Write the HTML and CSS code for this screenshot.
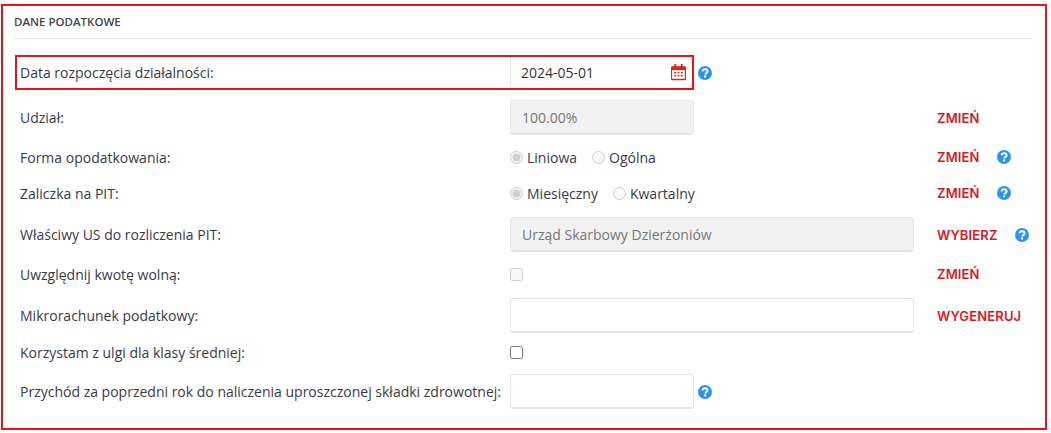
FILE: index.html
```html
<!DOCTYPE html>
<html lang="pl">
<head>
    <meta charset="UTF-8">
    <meta name="viewport" content="width=device-width, initial-scale=1.0">
    <title>Dane podatkowe</title>
    <link rel="stylesheet" href="styles.css">
</head>
<body>
    <svg class="sprite" width="0" height="0">
        <symbol id="help" viewBox="0 0 14 14">
            <circle cx="7" cy="7" r="7" fill="#2a94f0"/>
            <path d="M4.500 5.400C4.600 3.900 5.700 3.200 7.100 3.200c1.400 0 2.500.8 2.500 2 0 1-.6 1.500-1.300 1.900-.6.4-.8.6-.8 1.300" fill="none" stroke="#fff" stroke-width="1.900"/>
            <rect x="6" y="9.400" width="2.100" height="2" fill="#fff"/>
        </symbol>
    </svg>

    <div class="panel">
        <div class="panel-title">DANE PODATKOWE</div>

        <div class="form">
            <div class="start-row">
                <div class="highlight">
                    <label class="label">Data rozpoczęcia działalności:</label>
                    <div class="date-field">
                        <input class="date-input" type="text" value="2024-05-01">
                        <svg class="calendar" viewBox="0 0 16 18">
                            <path d="M1.500 3.500h13a1 1 0 0 1 1 1v11.500a1 1 0 0 1-1 1h-13a1 1 0 0 1-1-1V4.500a1 1 0 0 1 1-1z" fill="none" stroke="#d6281f" stroke-width="1.400"/>
                            <path d="M0.500 4.500a1 1 0 0 1 1-1h13a1 1 0 0 1 1 1V7H.5z" fill="#d6281f"/>
                            <rect x="3.500" y="0.500" width="2" height="4" rx="0.600" fill="#d6281f"/>
                            <rect x="10.500" y="0.500" width="2" height="4" rx="0.600" fill="#d6281f"/>
                            <path d="M3.500 9h2v1.500h-2zM7 9h2v1.500H7zM10.500 9h2v1.500h-2zM3.500 12.200h2v1.500h-2zM7 12.200h2v1.500H7zM10.500 12.200h2v1.500h-2z" fill="#d6281f"/>
                        </svg>
                    </div>
                </div>
                <svg class="help help-near"><use href="#help"/></svg>
            </div>

            <div class="row">
                <label class="label">Udział:</label>
                <input class="input input-short" type="text" value="100.00%" disabled>
                <div class="actions"><a class="action">ZMIEŃ</a></div>
            </div>

            <div class="row row-small">
                <label class="label">Forma opodatkowania:</label>
                <div class="radios">
                    <label class="radio"><input type="radio" name="forma" checked disabled>Liniowa</label>
                    <label class="radio"><input type="radio" name="forma" disabled>Ogólna</label>
                </div>
                <div class="actions"><a class="action">ZMIEŃ</a><svg class="help"><use href="#help"/></svg></div>
            </div>

            <div class="row row-small gap-wide">
                <label class="label">Zaliczka na PIT:</label>
                <div class="radios">
                    <label class="radio"><input type="radio" name="zaliczka" checked disabled>Miesięczny</label>
                    <label class="radio"><input type="radio" name="zaliczka" disabled>Kwartalny</label>
                </div>
                <div class="actions"><a class="action">ZMIEŃ</a><svg class="help"><use href="#help"/></svg></div>
            </div>

            <div class="row gap-wide">
                <label class="label">Właściwy US do rozliczenia PIT:</label>
                <input class="input input-long" type="text" value="Urząd Skarbowy Dzierżoniów" disabled>
                <div class="actions"><a class="action">WYBIERZ</a><svg class="help"><use href="#help"/></svg></div>
            </div>

            <div class="row row-small">
                <label class="label">Uwzględnij kwotę wolną:</label>
                <div><input class="check" type="checkbox" disabled></div>
                <div class="actions"><a class="action">ZMIEŃ</a></div>
            </div>

            <div class="row gap-wide">
                <label class="label">Mikrorachunek podatkowy:</label>
                <input class="input input-long" type="text">
                <div class="actions"><a class="action">WYGENERUJ</a></div>
            </div>

            <div class="row row-small gap-tight">
                <label class="label">Korzystam z ulgi dla klasy średniej:</label>
                <div><input class="check" type="checkbox"></div>
            </div>

            <div class="row">
                <label class="label">Przychód za poprzedni rok do naliczenia uproszczonej składki zdrowotnej:</label>
                <div class="field-help">
                    <input class="input input-short" type="text">
                    <svg class="help help-near"><use href="#help"/></svg>
                </div>
            </div>
        </div>
    </div>
</body>
</html>
```

FILE: styles.css
```css
body { margin: 0; font-family: "Open Sans", sans-serif; font-size: 14px; color: #3a3a4a; background: #fff; }
.sprite { display: block; }

.panel { box-sizing: border-box; width: 1046px; height: 426px; margin: 4px 0 0 1px; border: 2px solid #e0161c; padding: 0 12px 0 11px; }
.panel-title { height: 32px; line-height: 32px; border-bottom: 1px solid #eaeaea; font-size: 11.5px; font-weight: 600; color: #444; }

.form { padding: 16px 0 0 6px; }
.row { display: grid; grid-template-columns: 490px 427px auto; align-items: center; height: 35px; margin-top: 10px; }
.row-small { height: 24px; }
.gap-wide { margin-top: 12px; }
.gap-tight { margin-top: 7px; }
.label { white-space: nowrap; }

.start-row { display: flex; align-items: center; }
.highlight { box-sizing: border-box; display: grid; grid-template-columns: 490px 182px; width: 679px; height: 35px; margin-left: -5px; padding-left: 3px; border: 2px solid #e0161c; align-items: center; }
.date-field { position: relative; height: 31px; }
.date-input { box-sizing: border-box; width: 100%; height: 100%; padding: 0 0 0 10px; border: 0; border-left: 1px solid #e6e6e6; font: 14px "Open Sans", sans-serif; color: #333; outline: none; }
.calendar { position: absolute; top: 6px; right: 6px; width: 15px; height: 18px; }

.input { box-sizing: border-box; height: 35px; padding: 0 11px; border: 1px solid #e6e6e6; border-bottom-width: 2px; border-radius: 3px; background: #fff; font: 14px "Open Sans", sans-serif; color: #333; }
.input:disabled { background: #f2f2f2; color: #777; }
.input-short { width: 184px; }
.input-long { width: 404px; }

.radios { display: flex; gap: 15px; }
.radio { display: flex; align-items: center; gap: 4px; }
.radio input { width: 13px; height: 13px; margin: 0; }
.check { display: block; width: 13px; height: 13px; margin: 0; }

.actions { display: flex; align-items: center; gap: 17px; }
.action { font-family: Inter, sans-serif; font-size: 13px; font-weight: 600; letter-spacing: 0.15px; color: #d9181e; }
.help { display: block; width: 14px; height: 14px; }
.help-near { margin-left: 4px; }
.field-help { display: flex; align-items: center; }
```
